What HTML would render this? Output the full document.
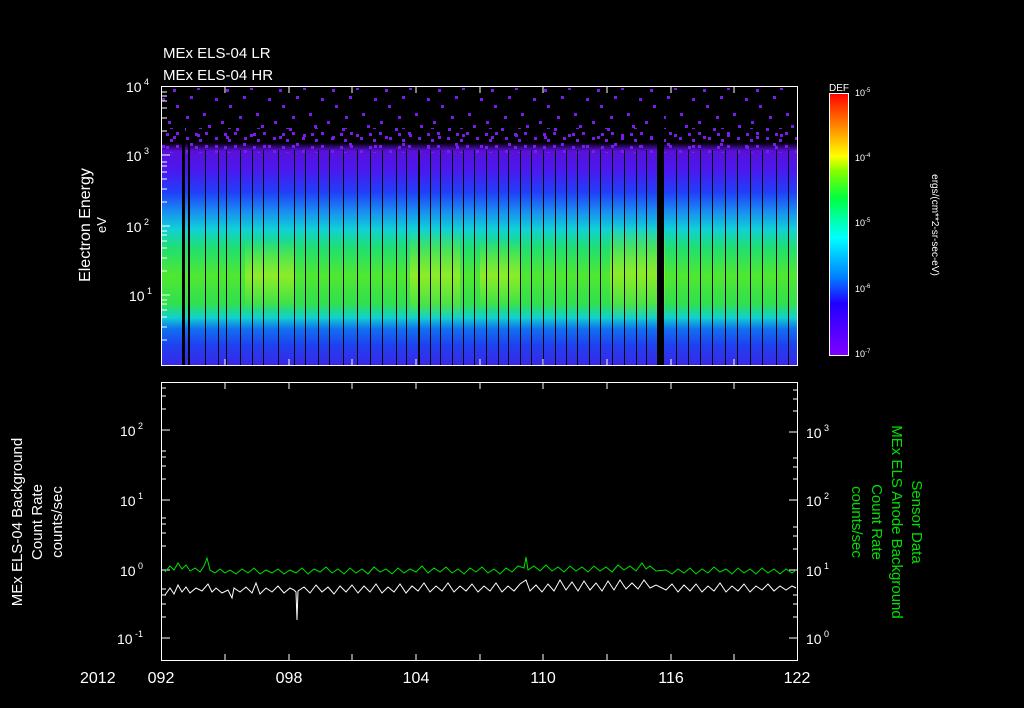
<!DOCTYPE html>
<html><head><meta charset="utf-8"><style>
html,body{margin:0;padding:0;background:#000;width:1024px;height:708px;overflow:hidden}
svg text{font-family:"Liberation Sans",sans-serif;fill:#fff}
</style></head><body>
<svg width="1024" height="708" viewBox="0 0 1024 708" xmlns="http://www.w3.org/2000/svg">
<defs>
<linearGradient id="spec" x1="0" y1="0" x2="0" y2="1">
<stop offset="0" stop-color="#000"/>
<stop offset="0.2" stop-color="#000"/>
<stop offset="0.23" stop-color="#5a10d8"/>
<stop offset="0.3" stop-color="#4a18f0"/>
<stop offset="0.38" stop-color="#2040f8"/>
<stop offset="0.45" stop-color="#1890f0"/>
<stop offset="0.51" stop-color="#10d0d8"/>
<stop offset="0.58" stop-color="#20e070"/>
<stop offset="0.68" stop-color="#50e830"/>
<stop offset="0.78" stop-color="#30e050"/>
<stop offset="0.83" stop-color="#10d0d0"/>
<stop offset="0.87" stop-color="#1070f0"/>
<stop offset="0.93" stop-color="#2040f0"/>
<stop offset="1" stop-color="#3828e8"/>
</linearGradient>
<linearGradient id="yel" x1="0" y1="0" x2="0" y2="1">
<stop offset="0" stop-color="#c8f020" stop-opacity="0"/>
<stop offset="0.5" stop-color="#c8f020" stop-opacity="0.5"/>
<stop offset="1" stop-color="#c8f020" stop-opacity="0"/>
</linearGradient>
<linearGradient id="cb" x1="0" y1="1" x2="0" y2="0">
<stop offset="0" stop-color="#8000ff"/>
<stop offset="0.2" stop-color="#2000ff"/>
<stop offset="0.3" stop-color="#0080ff"/>
<stop offset="0.45" stop-color="#00ffff"/>
<stop offset="0.6" stop-color="#00ff40"/>
<stop offset="0.7" stop-color="#80ff00"/>
<stop offset="0.76" stop-color="#ffff00"/>
<stop offset="0.88" stop-color="#ff8000"/>
<stop offset="1" stop-color="#ff0000"/>
</linearGradient>
<pattern id="sp" width="53" height="47" patternUnits="userSpaceOnUse">
<rect x="3" y="4" width="3" height="3" fill="#7a1cf0"/>
<rect x="17" y="11" width="3" height="3" fill="#7a1cf0"/>
<rect x="31" y="2" width="3" height="3" fill="#7a1cf0"/>
<rect x="44" y="19" width="3" height="3" fill="#7a1cf0"/>
<rect x="9" y="27" width="3" height="3" fill="#7a1cf0"/>
<rect x="24" y="34" width="3" height="3" fill="#7a1cf0"/>
<rect x="38" y="40" width="3" height="3" fill="#7a1cf0"/>
<rect x="49" y="31" width="3" height="3" fill="#7a1cf0"/>
<rect x="14" y="42" width="3" height="3" fill="#7a1cf0"/>
<rect x="27" y="22" width="3" height="3" fill="#7a1cf0"/>
</pattern>
<pattern id="sp2" width="29" height="13" patternUnits="userSpaceOnUse">
<rect x="2" y="2" width="3" height="3" fill="#7a1cf0"/>
<rect x="12" y="7" width="3" height="3" fill="#7a1cf0"/>
<rect x="21" y="3" width="3" height="3" fill="#7a1cf0"/>
<rect x="25" y="9" width="3" height="3" fill="#7a1cf0"/>
</pattern>
</defs>
<text x="163" y="58" font-size="15">MEx ELS-04 LR</text>
<text x="163" y="80" font-size="15">MEx ELS-04 HR</text>
<rect x="162" y="87" width="635" height="278" fill="url(#spec)"/>
<rect x="162" y="88" width="635" height="60" fill="url(#sp)"/>
<rect x="162" y="128" width="635" height="25" fill="url(#sp2)"/>
<rect x="410" y="230" width="50" height="90" fill="url(#yel)"/>
<rect x="610" y="225" width="55" height="95" fill="url(#yel)"/>
<rect x="245" y="240" width="50" height="70" fill="url(#yel)"/>
<rect x="480" y="240" width="40" height="70" fill="url(#yel)"/>
<g fill="#000">
<rect x="182" y="90" width="3" height="275"/><rect x="188" y="140" width="2" height="225"/>
<rect x="205" y="150" width="1" height="215"/><rect x="218" y="150" width="1" height="215"/><rect x="226" y="150" width="1" height="215"/>
<rect x="240" y="150" width="1" height="215"/><rect x="252" y="150" width="1" height="215"/><rect x="263" y="150" width="1" height="215"/>
<rect x="278" y="150" width="1" height="215"/><rect x="294" y="150" width="1" height="215"/><rect x="305" y="150" width="1" height="215"/>
<rect x="318" y="150" width="1" height="215"/><rect x="329" y="150" width="1" height="215"/><rect x="343" y="150" width="1" height="215"/>
<rect x="357" y="150" width="1" height="215"/><rect x="370" y="150" width="1" height="215"/><rect x="382" y="150" width="1" height="215"/>
<rect x="396" y="150" width="1" height="215"/><rect x="406" y="150" width="1" height="215"/><rect x="418" y="150" width="2" height="215"/>
<rect x="430" y="150" width="1" height="215"/><rect x="440" y="150" width="1" height="215"/><rect x="452" y="150" width="1" height="215"/>
<rect x="463" y="150" width="1" height="215"/><rect x="474" y="150" width="1" height="215"/><rect x="486" y="150" width="1" height="215"/>
<rect x="498" y="150" width="1" height="215"/><rect x="508" y="150" width="1" height="215"/><rect x="520" y="150" width="1" height="215"/>
<rect x="531" y="150" width="1" height="215"/><rect x="543" y="150" width="1" height="215"/><rect x="555" y="150" width="1" height="215"/>
<rect x="566" y="150" width="1" height="215"/><rect x="577" y="150" width="1" height="215"/><rect x="589" y="150" width="1" height="215"/>
<rect x="600" y="150" width="1" height="215"/><rect x="612" y="150" width="1" height="215"/><rect x="624" y="150" width="1" height="215"/>
<rect x="636" y="150" width="1" height="215"/><rect x="646" y="150" width="1" height="215"/>
<rect x="657" y="90" width="7" height="275"/>
<rect x="676" y="150" width="1" height="215"/><rect x="688" y="150" width="1" height="215"/><rect x="700" y="150" width="1" height="215"/>
<rect x="712" y="150" width="1" height="215"/><rect x="725" y="150" width="1" height="215"/><rect x="737" y="150" width="1" height="215"/>
<rect x="750" y="150" width="1" height="215"/><rect x="762" y="150" width="1" height="215"/><rect x="776" y="150" width="1" height="215"/><rect x="788" y="150" width="1" height="215"/>
</g>
<g stroke="#fff" fill="none" stroke-width="1">
<rect x="161.5" y="86.5" width="636" height="279"/>
<rect x="161.5" y="382.5" width="636" height="278"/>
</g>
<g stroke="#fff">
<path d="M162 155h8M162 226h8M162 295h8M162 131h5M162 118h5M162 108h5M162 101h5M162 96h5M162 92h5M162 202h5M162 189h5M162 179h5M162 172h5M162 166h5M162 162h5M162 271h5M162 258h5M162 248h5M162 241h5M162 235h5M162 231h5M162 340h5M162 327h5M162 317h5M162 310h5M162 304h5M162 300h5"/>
<path d="M225 365v-6M289 365v-6M352 365v-6M416 365v-6M480 365v-6M543 365v-6M607 365v-6M671 365v-6M734 365v-6M225 87v6M289 87v6M352 87v6M416 87v6M480 87v6M543 87v6M607 87v6M671 87v6M734 87v6"/>
</g>
<g font-size="14">
<text x="126" y="92">10</text><text x="144" y="85" font-size="9">4</text>
<text x="126" y="161">10</text><text x="144" y="154" font-size="9">3</text>
<text x="126" y="232">10</text><text x="144" y="225" font-size="9">2</text>
<text x="129" y="301">10</text><text x="147" y="294" font-size="9">1</text>
</g>
<text transform="translate(90 225) rotate(-90)" font-size="16" text-anchor="middle">Electron Energy</text>
<text transform="translate(106 225) rotate(-90)" font-size="13" text-anchor="middle">eV</text>
<text x="829" y="91" font-size="10">DEF</text>
<rect x="829" y="93" width="20" height="263" fill="url(#cb)"/>
<rect x="829.5" y="93.5" width="19" height="262" fill="none" stroke="#fff"/>
<g font-size="9">
<text x="855" y="96">10<tspan dy="-4" font-size="6">-5</tspan></text>
<text x="855" y="161">10<tspan dy="-4" font-size="6">-4</tspan></text>
<text x="855" y="226">10<tspan dy="-4" font-size="6">-5</tspan></text>
<text x="855" y="292">10<tspan dy="-4" font-size="6">-6</tspan></text>
<text x="855" y="357">10<tspan dy="-4" font-size="6">-7</tspan></text>
</g>
<text transform="translate(932 225) rotate(90)" font-size="10" text-anchor="middle">ergs/(cm**2-sr-sec-eV)</text>
<g stroke="#fff">
<path d="M162 430h8M162 500h8M162 570h8M162 638h8M797 432h-8M797 500h-8M797 570h-8M797 638h-8"/>
<path d="M225 660v-6M289 660v-6M352 660v-6M416 660v-6M480 660v-6M543 660v-6M607 660v-6M671 660v-6M734 660v-6M225 383v6M289 383v6M352 383v6M416 383v6M480 383v6M543 383v6M607 383v6M671 383v6M734 383v6"/>
<path d="M162 409h4M162 396h4M162 388h4M162 479h4M162 466h4M162 457h4M162 451h4M162 546h4M162 533h4M162 524h4M162 518h4M162 617h4M162 604h4M162 595h4M162 589h4M797 411h-4M797 399h-4M797 390h-4M797 479h-4M797 467h-4M797 458h-4M797 549h-4M797 536h-4M797 527h-4M797 617h-4M797 604h-4M797 595h-4"/>
</g>
<g font-size="14">
<text x="120" y="436">10</text><text x="138" y="429" font-size="9">2</text>
<text x="120" y="506">10</text><text x="138" y="499" font-size="9">1</text>
<text x="120" y="576">10</text><text x="138" y="569" font-size="9">0</text>
<text x="117" y="644">10</text><text x="135" y="637" font-size="9">-1</text>
<text x="806" y="438">10</text><text x="824" y="431" font-size="9">3</text>
<text x="806" y="506">10</text><text x="824" y="499" font-size="9">2</text>
<text x="806" y="576">10</text><text x="824" y="569" font-size="9">1</text>
<text x="806" y="644">10</text><text x="824" y="637" font-size="9">0</text>
</g>
<g font-size="16">
<text x="80" y="683">2012</text>
<text x="161" y="683" text-anchor="middle">092</text>
<text x="289" y="683" text-anchor="middle">098</text>
<text x="416" y="683" text-anchor="middle">104</text>
<text x="543" y="683" text-anchor="middle">110</text>
<text x="671" y="683" text-anchor="middle">116</text>
<text x="797" y="683" text-anchor="middle">122</text>
</g>
<g font-size="15">
<text transform="translate(22 522) rotate(-90)" text-anchor="middle">MEx ELS-04 Background</text>
<text transform="translate(42 522) rotate(-90)" text-anchor="middle">Count Rate</text>
<text transform="translate(62 522) rotate(-90)" text-anchor="middle">counts/sec</text>
</g>
<g font-size="15">
<text transform="translate(912 522) rotate(90)" text-anchor="middle" style="fill:#00e000">Sensor Data</text>
<text transform="translate(892 522) rotate(90)" text-anchor="middle" style="fill:#00e000">MEx ELS Anode Background</text>
<text transform="translate(872 522) rotate(90)" text-anchor="middle" style="fill:#00e000">Count Rate</text>
<text transform="translate(852 522) rotate(90)" text-anchor="middle" style="fill:#00e000">counts/sec</text>
</g>
<polyline fill="none" stroke="#00e000" stroke-width="1" points="165,572 170,566 174,570 178,563 182,569 186,565 190,571 195,568 200,572 204,566 207,558 210,570 215,573 220,569 225,573 230,570 236,574 242,569 248,573 254,568 260,574 266,570 272,573 278,569 284,574 290,570 296,573 302,568 308,574 314,569 320,572 326,567 332,573 338,569 344,574 350,568 356,573 362,569 368,574 374,567 380,572 386,569 392,574 398,568 404,573 410,569 416,572 422,566 428,573 434,568 440,572 446,567 452,573 458,569 464,574 470,568 476,572 482,567 488,573 494,569 500,574 506,568 512,572 518,566 524,568 526,557 528,570 534,566 540,571 546,565 552,571 558,567 564,572 570,566 576,571 582,567 588,572 594,566 600,571 606,567 612,572 618,565 624,570 630,566 636,571 642,563 646,569 650,566 656,571 666,570 672,574 678,569 684,573 690,568 696,574 702,569 708,573 714,567 720,572 726,569 732,574 738,568 744,573 750,569 756,574 762,568 768,573 774,569 780,574 786,569 792,573 796,570"/>
<polyline fill="none" stroke="#fff" stroke-width="1" points="165,595 170,588 174,594 178,585 182,592 186,587 190,593 196,588 202,591 208,584 212,592 216,588 222,593 228,590 232,598 234,588 240,592 246,587 252,593 256,583 260,594 266,588 272,592 278,586 284,593 290,588 294,590 296,592 297,620 298,591 304,587 310,593 316,585 322,592 328,587 334,594 340,586 346,592 352,585 358,593 364,586 370,592 376,584 382,593 388,587 394,592 400,584 406,593 412,586 418,591 424,583 430,592 436,586 442,591 448,583 454,592 460,586 466,591 472,584 478,592 484,586 490,591 496,583 502,592 508,586 514,591 520,584 526,580 530,591 536,585 542,592 548,584 554,591 560,580 566,590 572,582 578,591 584,581 590,590 596,583 602,591 608,581 614,590 620,580 626,589 632,583 638,589 644,580 650,588 656,585 666,590 672,584 678,592 684,585 690,591 696,584 702,592 708,586 714,591 720,583 726,592 732,586 738,591 744,584 750,592 756,586 762,590 768,584 774,591 780,586 786,590 792,586 796,588"/>
</svg>
</body></html>
